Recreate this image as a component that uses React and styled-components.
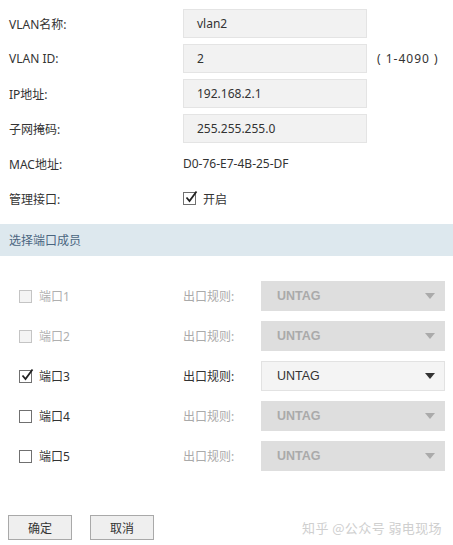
import React from "react";
import styled, { createGlobalStyle } from "styled-components";

const Global = createGlobalStyle`
  html, body { margin: 0; padding: 0; background: #fff; }
  body { font-family: "Noto Sans", "Noto Sans CJK SC", sans-serif; font-size: 12px; color: #333; }
`;

const Page = styled.div`
  width: 453px;
  height: 545px;
  overflow: hidden;
  display: flex;
  flex-direction: column;
`;

const Form = styled.div`
  display: flex;
  flex-direction: column;
  gap: 6px;
  padding: 9px 0 0 9px;
`;

const Row = styled.div`
  display: flex;
  align-items: center;
  height: 29px;
`;

const Label = styled.div`
  width: 174px;
  flex: none;
`;

const Field = styled.div`
  width: 184px;
  height: 29px;
  box-sizing: border-box;
  background: #f2f2f2;
  border: 1px solid #e4e4e4;
  padding-left: 13px;
  display: flex;
  align-items: center;
  color: #333;
`;

const Hint = styled.div`
  margin-left: 10px;
  color: #333;
  letter-spacing: 1px;
`;

const Value = styled.div`
  color: #333;
`;

const Check = styled.label`
  display: flex;
  align-items: center;
  gap: 7px;
  color: ${(p) => (p.$muted ? "#b0b0b0" : "#333")};
`;

const Box = styled.span`
  width: 13px;
  height: 13px;
  box-sizing: border-box;
  border: 1px solid ${(p) => (p.$disabled ? "#c4c4c4" : "#707070")};
  background: ${(p) => (p.$disabled ? "#f4f4f4" : "#fff")};
  display: inline-flex;
  position: relative;
  flex: none;
`;

const Tick = styled.svg`
  position: absolute;
  left: 1px;
  top: -3px;
`;

const Section = styled.div`
  margin-top: 11px;
  height: 32px;
  background: #dde8ee;
  display: flex;
  align-items: center;
  padding-left: 9px;
  color: #4a6580;
`;

const Ports = styled.div`
  display: flex;
  flex-direction: column;
  gap: 10px;
  margin-top: 25px;
`;

const PortRow = styled.div`
  display: flex;
  align-items: center;
  height: 30px;
`;

const PortCell = styled.div`
  width: 164px;
  padding-left: 19px;
  flex: none;
`;

const RuleLabel = styled.div`
  width: 78px;
  flex: none;
  color: ${(p) => (p.$muted ? "#aaa" : "#333")};
`;

const Select = styled.div`
  width: 184px;
  height: 30px;
  box-sizing: border-box;
  display: flex;
  align-items: center;
  justify-content: space-between;
  padding: 0 9px 0 15px;
  background: ${(p) => (p.$disabled ? "#dedede" : "#f4f4f4")};
  border: 1px solid ${(p) => (p.$disabled ? "#dedede" : "#e2e2e2")};
  color: ${(p) => (p.$disabled ? "#aaa" : "#333")};
  font-family: "Liberation Sans", "Noto Sans", sans-serif;
  font-weight: ${(p) => (p.$disabled ? "bold" : "normal")};
  font-size: 12.5px;
`;

const Buttons = styled.div`
  display: flex;
  align-items: center;
  margin-top: 44px;
  padding: 0 11px 0 8px;
  gap: 18px;
`;

const Button = styled.button`
  width: 64px;
  height: 25px;
  background: #efefef;
  border: 1px solid #a9a9a9;
  font-family: "Noto Sans CJK SC", sans-serif;
  font-size: 12px;
  color: #333;
  padding: 0;
`;

const Mark = styled.div`
  margin-left: auto;
  color: #cfcfcf;
  font-family: "Noto Sans CJK SC", sans-serif;
  font-size: 13px;
  letter-spacing: 0.4px;
`;

function CheckBox({ checked, disabled }) {
  return (
    <Box $disabled={disabled}>
      {checked && (
        <Tick width="14" height="14" viewBox="0 0 14 14">
          <path d="M1.5 7.5 L4.5 11 L11.5 1.5" fill="none" stroke="#222" strokeWidth="1.8" />
        </Tick>
      )}
    </Box>
  );
}

function Arrow({ color }) {
  return (
    <svg width="10" height="6" viewBox="0 0 10 6">
      <path d="M0 0 H10 L5 6 Z" fill={color} />
    </svg>
  );
}

const ports = [
  { name: "端口1", disabled: true, checked: false },
  { name: "端口2", disabled: true, checked: false },
  { name: "端口3", disabled: false, checked: true },
  { name: "端口4", disabled: false, checked: false },
  { name: "端口5", disabled: false, checked: false },
];

export default function App() {
  return (
    <Page>
      <Global />
      <Form>
        <Row>
          <Label>VLAN名称:</Label>
          <Field>vlan2</Field>
        </Row>
        <Row>
          <Label>VLAN ID:</Label>
          <Field>2</Field>
          <Hint>( 1-4090 )</Hint>
        </Row>
        <Row>
          <Label>IP地址:</Label>
          <Field>192.168.2.1</Field>
        </Row>
        <Row>
          <Label>子网掩码:</Label>
          <Field>255.255.255.0</Field>
        </Row>
        <Row>
          <Label>MAC地址:</Label>
          <Value>D0-76-E7-4B-25-DF</Value>
        </Row>
        <Row>
          <Label>管理接口:</Label>
          <Check>
            <CheckBox checked />
            开启
          </Check>
        </Row>
      </Form>
      <Section>选择端口成员</Section>
      <Ports>
        {ports.map((p) => {
          const selDisabled = !p.checked;
          return (
            <PortRow key={p.name}>
              <PortCell>
                <Check $muted={p.disabled}>
                  <CheckBox checked={p.checked} disabled={p.disabled} />
                  {p.name}
                </Check>
              </PortCell>
              <RuleLabel $muted={selDisabled}>出口规则:</RuleLabel>
              <Select $disabled={selDisabled}>
                UNTAG
                <Arrow color={selDisabled ? "#aaa" : "#333"} />
              </Select>
            </PortRow>
          );
        })}
      </Ports>
      <Buttons>
        <Button>确定</Button>
        <Button>取消</Button>
        <Mark>知乎 @公众号 弱电现场</Mark>
      </Buttons>
    </Page>
  );
}
